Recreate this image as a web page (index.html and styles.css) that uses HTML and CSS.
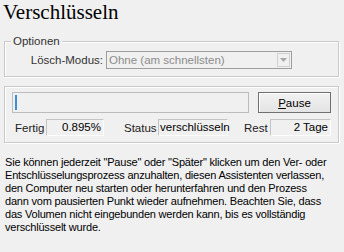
FILE: index.html
```html
<!DOCTYPE html>
<html>
<head>
<meta charset="utf-8">
<link rel="stylesheet" href="styles.css">
</head>
<body>
<div class="page">
  <h1 class="title">Verschlüsseln</h1>
  <div class="group group-options">
    <span class="legend">Optionen</span>
    <div class="combo-row">
      <span class="combo-label">Lösch-Modus:</span>
      <div class="combo">
        <span class="combo-text">Ohne (am schnellsten)</span>
        <span class="combo-btn"><svg width="7" height="4" viewBox="0 0 7 4"><path d="M0 0h7L3.5 4z" fill="#a8a8a8"/></svg></span>
      </div>
    </div>
  </div>
  <div class="group group-progress">
    <div class="row row-top">
      <div class="progress"><div class="progress-fill" style="width:1%"></div></div>
      <button class="btn"><u>P</u>ause</button>
    </div>
    <div class="row row-stats">
      <span class="lbl lbl-fertig">Fertig</span>
      <span class="box box-fertig">0.895%</span>
      <span class="lbl lbl-status">Status</span>
      <span class="box box-status">verschlüsseln</span>
      <span class="lbl lbl-rest">Rest</span>
      <span class="box box-rest">2 Tage</span>
    </div>
  </div>
  <p class="info">Sie können jederzeit "Pause" oder "Später" klicken um den Ver- oder<br>Entschlüsselungsprozess anzuhalten, diesen Assistenten verlassen,<br>den Computer neu starten oder herunterfahren und den Prozess<br>dann vom pausierten Punkt wieder aufnehmen. Beachten Sie, dass<br>das Volumen nicht eingebunden werden kann, bis es vollständig<br>verschlüsselt wurde.</p>
</div>
</body>
</html>
```

FILE: styles.css
```css
html, body {
  margin: 0;
  padding: 0;
  background: #f0f0f0;
}
.page {
  width: 344px;
  height: 252px;
  overflow: hidden;
  font-family: "Liberation Sans", Arial, sans-serif;
  font-size: 11.5px;
  color: #000;
}
.title {
  margin: 0;
  padding: 0 0 0 3px;
  height: 34px;
  font-family: "Liberation Serif", serif;
  font-weight: normal;
  font-size: 21px;
  line-height: 24px;
  color: #000;
}
.group {
  position: relative;
  margin: 0 5px 0 4px;
  border: 1px solid #c9c9c9;
  box-shadow: inset 1px 1px 0 #fff, 1px 1px 0 #fff;
}
.group-options {
  height: 34px;
  margin-top: 7px;
}
.legend {
  position: absolute;
  left: 6px;
  top: -8px;
  padding: 0 2px;
  background: #f0f0f0;
  line-height: 14px;
  color: #333;
}
.combo-row {
  display: flex;
  align-items: center;
  margin-top: 9px;
}
.combo-label {
  width: 98px;
  text-align: right;
  color: #333;
}
.combo {
  display: flex;
  align-items: center;
  margin-left: 3px;
  width: 184px;
  height: 16px;
  border: 1px solid #9e9e9e;
  background: #f0f0f0;
}
.combo-text {
  flex: 1;
  padding-left: 2px;
  color: #8d8d8d;
}
.combo-btn {
  width: 13px;
  height: 14px;
  margin-right: 1px;
  border: 1px solid #d0d0d0;
  box-sizing: border-box;
  display: flex;
  align-items: center;
  justify-content: center;
}
.group-progress {
  margin-top: 9px;
  padding: 5px 6px 0 7px;
  box-sizing: border-box;
  height: 57px;
}
.row {
  display: flex;
  align-items: center;
}
.progress {
  width: 237px;
  height: 21px;
  border: 1px solid #bcbcbc;
  background: #f0f0f0;
  padding: 2px;
  box-sizing: border-box;
}
.progress-fill {
  height: 100%;
  min-width: 2px;
  background: #3c8fd6;
}
.btn {
  margin-left: 9px;
  width: 73px;
  height: 21px;
  padding: 0;
  font-family: inherit;
  font-size: 11.5px;
  color: #000;
  background: linear-gradient(#f2f2f2, #e4e4e4);
  border: 1px solid #707070;
  border-radius: 0;
  box-shadow: inset 1px 1px 0 #fff;
}
.row-stats {
  margin-top: 6px;
  height: 17px;
}
.lbl {
  color: #222;
}
.box {
  height: 17px;
  box-sizing: border-box;
  border: 1px solid #c4c4c4;
  border-right-color: #fff;
  border-bottom-color: #fff;
  line-height: 15px;
  color: #000;
}
.lbl-fertig { margin-left: 3px; width: 31px; }
.box-fertig { width: 58px; text-align: right; padding-right: 2px; }
.lbl-status { margin-left: 20px; width: 34px; }
.box-status { width: 70px; padding-left: 1px; }
.lbl-rest { margin-left: 16px; width: 26px; }
.box-rest { width: 61px; text-align: right; padding-right: 2px; }
.info {
  margin: 13px 0 0 5px;
  white-space: nowrap;
  font-size: 11px;
  letter-spacing: -0.2px;
  line-height: 13px;
  color: #000;
}
```
